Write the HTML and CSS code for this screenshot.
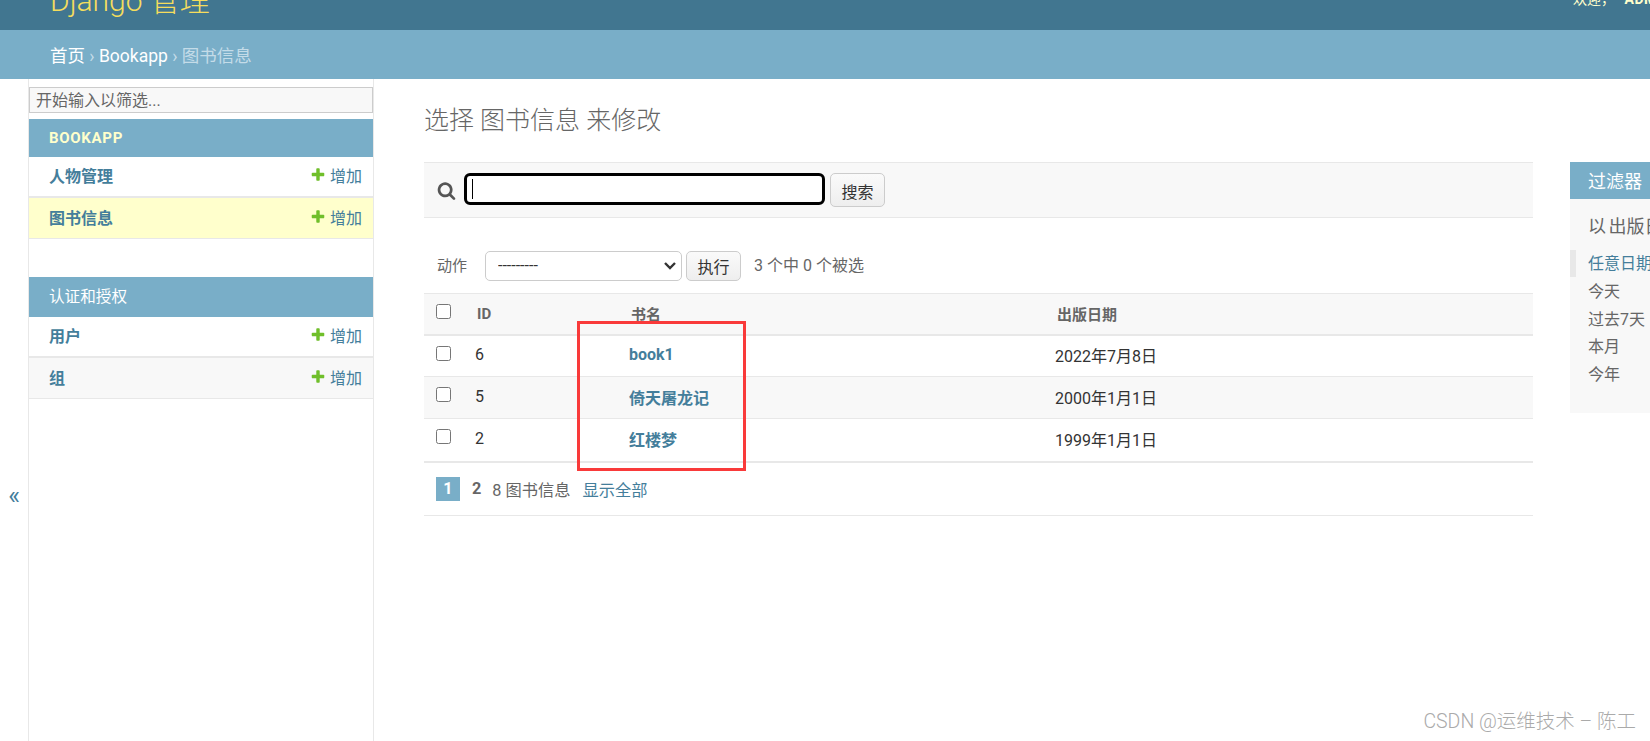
FILE: index.html
```html
<!DOCTYPE html>
<html lang="zh-CN">
<head>
    <meta charset="UTF-8">
    <title>选择 图书信息 来修改 | Django 站点管理员</title>
    <link rel="stylesheet" href="styles.css">
</head>
<body>
    <header class="site-header">
        <div class="branding">Django 管理</div>
        <div class="user-tools">欢迎， <strong>ADMIN</strong></div>
    </header>

    <nav class="breadcrumbs">
        <a href="#">首页</a> <span class="sep">›</span> <a href="#">Bookapp</a> <span class="sep">›</span> <span class="current">图书信息</span>
    </nav>

    <div class="main">
        <button class="nav-toggle" type="button">«</button>

        <aside class="nav-sidebar">
            <input class="nav-filter" type="search" placeholder="开始输入以筛选...">

            <div class="app-module">
                <div class="app-caption current-app">BOOKAPP</div>
                <div class="app-row">
                    <a class="model-link" href="#">人物管理</a>
                    <a class="add-link" href="#">
                        <svg class="add-icon" viewBox="0 0 1792 1792"><path d="M1600 736v192q0 40-28 68t-68 28h-416v416q0 40-28 68t-68 28h-192q-40 0-68-28t-28-68v-416h-416q-40 0-68-28t-28-68v-192q0-40 28-68t68-28h416v-416q0-40 28-68t68-28h192q40 0 68 28t28 68v416h416q40 0 68 28t28 68z"/></svg>增加
                    </a>
                </div>
                <div class="app-row selected">
                    <a class="model-link" href="#">图书信息</a>
                    <a class="add-link" href="#">
                        <svg class="add-icon" viewBox="0 0 1792 1792"><path d="M1600 736v192q0 40-28 68t-68 28h-416v416q0 40-28 68t-68 28h-192q-40 0-68-28t-28-68v-416h-416q-40 0-68-28t-28-68v-192q0-40 28-68t68-28h416v-416q0-40 28-68t68-28h192q40 0 68 28t28 68v416h416q40 0 68 28t28 68z"/></svg>增加
                    </a>
                </div>
            </div>

            <div class="app-module">
                <div class="app-caption">认证和授权</div>
                <div class="app-row">
                    <a class="model-link" href="#">用户</a>
                    <a class="add-link" href="#">
                        <svg class="add-icon" viewBox="0 0 1792 1792"><path d="M1600 736v192q0 40-28 68t-68 28h-416v416q0 40-28 68t-68 28h-192q-40 0-68-28t-28-68v-416h-416q-40 0-68-28t-28-68v-192q0-40 28-68t68-28h416v-416q0-40 28-68t68-28h192q40 0 68 28t28 68v416h416q40 0 68 28t28 68z"/></svg>增加
                    </a>
                </div>
                <div class="app-row alt">
                    <a class="model-link" href="#">组</a>
                    <a class="add-link" href="#">
                        <svg class="add-icon" viewBox="0 0 1792 1792"><path d="M1600 736v192q0 40-28 68t-68 28h-416v416q0 40-28 68t-68 28h-192q-40 0-68-28t-28-68v-416h-416q-40 0-68-28t-28-68v-192q0-40 28-68t68-28h416v-416q0-40 28-68t68-28h192q40 0 68 28t28 68v416h416q40 0 68 28t28 68z"/></svg>增加
                    </a>
                </div>
            </div>
        </aside>

        <main class="content">
            <h1>选择 图书信息 来修改</h1>

            <div class="changelist">
                <div class="results">
                    <div class="toolbar">
                        <svg class="search-icon" viewBox="0 0 1792 1792"><path d="M1216 832q0-185-131.5-316.5t-316.5-131.5-316.5 131.5-131.5 316.5 131.5 316.5 316.5 131.5 316.5-131.5 131.5-316.5zm512 832q0 52-38 90t-90 38q-54 0-90-38l-343-342q-179 124-399 124-143 0-273.5-55.5t-225-150-150-225-55.5-273.5 55.5-273.5 150-225 225-150 273.5-55.5 273.5 55.5 225 150 150 225 55.5 273.5q0 220-124 399l343 343q37 37 37 90z"/></svg>
                        <div class="search-box">
                            <input class="search-input" type="text">
                            <span class="caret"></span>
                        </div>
                        <button class="btn search-btn" type="button">搜索</button>
                    </div>

                    <div class="actions">
                        <label class="actions-label">动作</label>
                        <select class="actions-select">
                            <option>---------</option>
                        </select>
                        <button class="btn go-btn" type="button">执行</button>
                        <span class="action-counter">3 个中 0 个被选</span>
                    </div>

                    <table class="result-list">
                        <thead>
                            <tr>
                                <th class="col-check"><input type="checkbox"></th>
                                <th class="col-id">ID</th>
                                <th class="col-name">书名</th>
                                <th>出版日期</th>
                            </tr>
                        </thead>
                        <tbody>
                            <tr>
                                <td><input type="checkbox"></td>
                                <td>6</td>
                                <td><a href="#">book1</a></td>
                                <td>2022年7月8日</td>
                            </tr>
                            <tr class="alt">
                                <td><input type="checkbox"></td>
                                <td>5</td>
                                <td><a href="#">倚天屠龙记</a></td>
                                <td>2000年1月1日</td>
                            </tr>
                            <tr>
                                <td><input type="checkbox"></td>
                                <td>2</td>
                                <td><a href="#">红楼梦</a></td>
                                <td>1999年1月1日</td>
                            </tr>
                        </tbody>
                    </table>

                    <div class="paginator">
                        <span class="this-page">1</span>
                        <a class="page-link" href="#">2</a>
                        <span class="page-count">8 图书信息</span>
                        <a class="show-all" href="#">显示全部</a>
                    </div>
                </div>

                <div class="filter">
                    <h2>过滤器</h2>
                    <h3>以 出版日期</h3>
                    <ul>
                        <li class="selected"><a href="#">任意日期</a></li>
                        <li><a href="#">今天</a></li>
                        <li><a href="#">过去7天</a></li>
                        <li><a href="#">本月</a></li>
                        <li><a href="#">今年</a></li>
                    </ul>
                </div>
            </div>
        </main>
    </div>

    <!-- red box drawn over the screenshot -->
    <div class="red-box"></div>
    <div class="watermark">CSDN @运维技术 – 陈工</div>
</body>
</html>
```

FILE: styles.css
```css
* {
    box-sizing: border-box;
}

html, body {
    height: 741px;
}

body {
    margin: 0;
    position: relative;
    overflow: hidden;
    background-color: #fff;
    color: #333;
    font-family: Roboto, "Noto Sans CJK SC", sans-serif;
    font-size: 16px;
}

a {
    color: #447e9b;
    text-decoration: none;
}

/* Header */
.site-header {
    display: flex;
    justify-content: space-between;
    height: 30px;
    overflow: hidden;
    background-color: #417690;
}

.branding {
    margin-top: -19px;
    padding-left: 50px;
    color: #f5dd5d;
    font-size: 30px;
    font-weight: 300;
    line-height: 40px;
    white-space: nowrap;
}

.user-tools {
    width: 77px;
    margin-top: -11px;
    color: #ffc;
    font-size: 14px;
    line-height: 20px;
    white-space: nowrap;
    overflow: hidden;
}

.user-tools strong {
    margin-left: 6px;
    letter-spacing: 0.5px;
}

.breadcrumbs {
    height: 49px;
    padding-left: 50px;
    background-color: #79aec8;
    color: #c4dce8;
    font-size: 17.5px;
    line-height: 52px;
}

.breadcrumbs a {
    color: #fff;
}

/* Main layout */
.main {
    display: flex;
    height: 662px;
}

.nav-toggle {
    flex: 0 0 28px;
    padding: 170px 0 0;
    border: 0;
    background-color: #fff;
    color: #447e9b;
    font-family: inherit;
    font-size: 25px;
    line-height: 1;
}

.nav-sidebar {
    flex: 0 0 346px;
    padding-top: 8px;
    border-left: 1px solid #e8e8e8;
    border-right: 1px solid #e8e8e8;
}

.nav-filter {
    display: block;
    width: 344px;
    height: 26px;
    margin-bottom: 6px;
    padding: 0 6px;
    border: 1px solid #ccc;
    border-radius: 0;
    background-color: #f8f8f8;
    color: #333;
    font-family: inherit;
    font-size: 16px;
    outline: none;
}

.nav-filter::placeholder {
    color: #666;
    opacity: 1;
}

.app-module {
    margin-bottom: 38px;
}

.app-caption {
    height: 40px;
    padding-left: 20px;
    background-color: #79aec8;
    color: #fff;
    font-size: 15.6px;
    line-height: 40px;
}

.app-caption.current-app {
    height: 38px;
    color: #ffc;
    font-size: 15px;
    font-weight: 700;
    letter-spacing: 0.7px;
    line-height: 38px;
}

.app-row {
    display: flex;
    justify-content: space-between;
    align-items: center;
    height: 41px;
    padding: 0 11px 3px 20px;
    border-bottom: 2px solid #e8e8e8;
}

.app-row.selected {
    height: 41px;
    background-color: #ffc;
    border-bottom-width: 1px;
    padding-bottom: 2px;
}

.app-row.alt {
    background-color: #f8f8f8;
    border-bottom-width: 1px;
    padding-bottom: 2px;
}

.model-link {
    font-weight: 700;
}

.add-link {
    display: flex;
    align-items: center;
}

.add-icon {
    width: 16px;
    height: 16px;
    margin-right: 4px;
    fill: #70bf2b;
}

/* Content */
.content {
    flex: 1;
    min-width: 0;
    padding-left: 50px;
}

h1 {
    height: 83px;
    margin: 0;
    padding-top: 22px;
    color: #666;
    font-size: 25px;
    font-weight: 300;
    line-height: 40px;
}

.changelist {
    display: flex;
    gap: 37px;
}

.results {
    flex: 0 0 1109px;
}

.toolbar {
    display: flex;
    align-items: flex-start;
    height: 56px;
    padding: 10px 0 0 13px;
    background-color: #f8f8f8;
    border-top: 1px solid #e8e8e8;
    border-bottom: 1px solid #e8e8e8;
}

.search-icon {
    width: 19px;
    height: 19px;
    margin-top: 8px;
    margin-right: 8px;
    fill: #555;
}

.search-box {
    position: relative;
    height: 32px;
}

.search-input {
    display: block;
    width: 361px;
    height: 32px;
    border: 3px solid #000;
    border-radius: 6px;
    background-color: #fff;
    outline: none;
}

.caret {
    position: absolute;
    left: 8px;
    top: 6px;
    width: 1px;
    height: 20px;
    background-color: #000;
}

.btn {
    height: 34px;
    border: 1px solid #ccc;
    border-radius: 5px;
    background: linear-gradient(#fafafa, #eee);
    color: #333;
    font-family: inherit;
    font-size: 16px;
}

.search-btn {
    width: 55px;
    margin-left: 5px;
    padding-top: 2px;
}

.actions {
    display: flex;
    align-items: center;
    height: 75px;
    padding: 20px 0 0 13px;
    color: #666;
    font-size: 15px;
}

.actions-label {
    width: 48px;
    padding-bottom: 3px;
}

.actions-select {
    width: 197px;
    height: 30px;
    padding: 0 12px;
    border: 1px solid #ccc;
    border-radius: 5px;
    background: #fff url("data:image/svg+xml,%3Csvg xmlns='http://www.w3.org/2000/svg' viewBox='0 0 14 9'%3E%3Cpath d='M2 2l5 5 5-5' fill='none' stroke='%23333' stroke-width='2.4'/%3E%3C/svg%3E") no-repeat right 4px center / 14px 9px;
    color: #333;
    font-family: inherit;
    font-size: 16px;
    appearance: none;
}

.go-btn {
    width: 55px;
    height: 30px;
    margin-left: 4px;
}

.action-counter {
    margin-left: 13px;
    padding-bottom: 3px;
    font-size: 16px;
}

/* Result table */
.result-list {
    width: 100%;
    table-layout: fixed;
    border-collapse: collapse;
}

.result-list input {
    display: block;
    width: 15px;
    height: 15px;
    margin: 0;
}

.result-list th {
    height: 41px;
    padding: 0 0 0 15px;
    background-color: #f8f8f8;
    border-top: 1px solid #e8e8e8;
    border-bottom: 2px solid #e8e8e8;
    color: #666;
    font-size: 15px;
    text-align: left;
}

.result-list td {
    height: 42px;
    padding: 0 0 2px 13px;
    border-bottom: 1px solid #e8e8e8;
}

.result-list th.col-check {
    padding-left: 12px;
    vertical-align: top;
    padding-top: 10px;
}

.result-list td:first-child {
    padding-left: 12px;
    vertical-align: top;
    padding-top: 10px;
}

.col-check {
    width: 38px;
}

.col-id {
    width: 154px;
}

.col-name {
    width: 426px;
}

.result-list tr.alt td {
    background-color: #f8f8f8;
}

.result-list tbody tr:last-child td {
    border-bottom-width: 2px;
    height: 43px;
}

.result-list td a {
    font-weight: 700;
}

.paginator {
    display: flex;
    align-items: center;
    height: 53px;
    padding-left: 12px;
    border-bottom: 1px solid #e8e8e8;
    color: #666;
    font-size: 16.25px;
}

.this-page {
    width: 24px;
    height: 24px;
    background-color: #79aec8;
    color: #fff;
    font-weight: 700;
    line-height: 24px;
    text-align: center;
}

.page-link {
    margin-left: 12px;
    color: #666;
    font-weight: 700;
}

.page-count {
    margin-left: 11px;
}

.show-all {
    margin-left: 12px;
}

/* Filter panel */
.filter {
    flex: 0 0 300px;
    height: 251px;
    background-color: #f8f8f8;
}

.filter h2 {
    height: 37px;
    margin: 0;
    padding-left: 18px;
    background-color: #79aec8;
    color: #fff;
    font-size: 18px;
    font-weight: 400;
    line-height: 39px;
}

.filter h3 {
    margin: 0;
    padding: 16px 0 0 18px;
    color: #666;
    font-size: 18px;
    font-weight: 400;
    line-height: 24px;
    word-spacing: -2px;
}

.filter ul {
    margin: 11px 0 0;
    padding: 0;
    list-style: none;
}

.filter li {
    height: 27.4px;
    padding-left: 18px;
    line-height: 30px;
}

.filter li.selected {
    border-left: 6px solid #e8e8e8;
    padding-left: 12px;
    line-height: 28px;
}

.filter li a {
    color: #666;
}

.filter li.selected a {
    color: #447e9b;
}

/* Overlays */
.red-box {
    position: absolute;
    left: 577px;
    top: 321px;
    width: 169px;
    height: 150px;
    border: 3px solid #f93a3a;
}

.watermark {
    position: absolute;
    right: 14px;
    top: 710px;
    color: #aaa;
    font-size: 19.5px;
    font-weight: 300;
    line-height: 24px;
    white-space: nowrap;
}
```
